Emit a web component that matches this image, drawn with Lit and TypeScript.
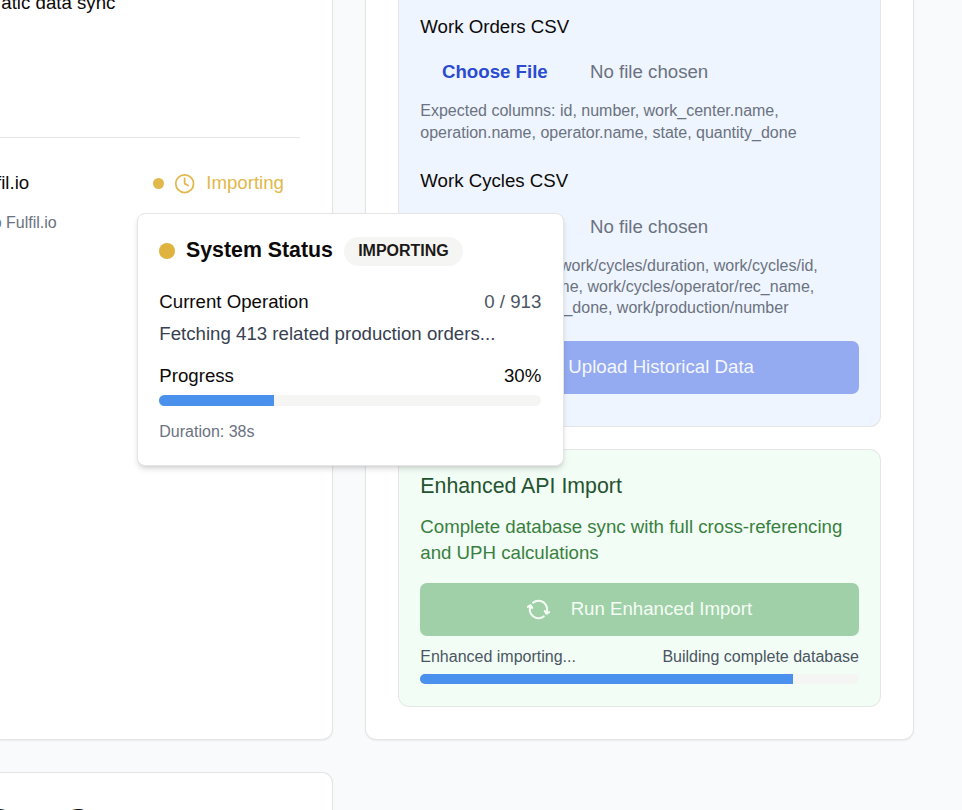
import { LitElement, html, css, svg } from "lit";
import { customElement, property } from "lit/decorators.js";
import { styleMap } from "lit/directives/style-map.js";

@customElement("progress-bar")
class ProgressBar extends LitElement {
  static styles = css`
    :host { display: block; }
    .track { height: 100%; border-radius: 999px; background: #f5f5f4; overflow: hidden; }
    .fill { height: 100%; background: #4991ec; }
  `;
  @property({ type: Number }) value = 0;
  render() {
    return html`<div class="track"><div class="fill" style=${styleMap({ width: `${this.value}%` })}></div></div>`;
  }
}

@customElement("status-popover")
class StatusPopover extends LitElement {
  static styles = css`
    :host {
      display: block; box-sizing: border-box; width: 427px; height: 253px;
      padding: 21.3px 21.7px 21.3px 21.3px; background: #fff; border: 1px solid #e5e5e5; border-radius: 8px;
      box-shadow: 0 4px 6px -1px rgba(0, 0, 0, 0.13), 0 2px 4px -2px rgba(0, 0, 0, 0.12);
      font-size: 18.67px; line-height: 26.67px; color: #0c0a09;
    }
    .head { display: flex; align-items: center; height: 32px; }
    .dot { width: 16px; height: 16px; border-radius: 50%; background: #e0b33f; margin-right: 10.7px; }
    .title { font-size: 21.33px; font-weight: 700; margin-right: 11px; padding-bottom: 2px; white-space: nowrap; }
    .badge {
      box-sizing: border-box; width: 119px; height: 29px; line-height: 28px; border-radius: 15px;
      background: #f5f5f4; color: #1c1917; font-size: 16px; font-weight: 700; text-align: center;
    }
    .row { display: flex; justify-content: space-between; }
    .op { margin-top: 21.3px; }
    .count { color: #4b5563; }
    .message { margin-top: 5.3px; color: #374151; }
    .progress { margin-top: 16px; }
    progress-bar { height: 10.67px; margin-top: 5px; }
    .duration { margin-top: 15px; font-size: 16px; line-height: 21.33px; color: #6b7280; }
  `;
  render() {
    return html`
      <div class="head"><span class="dot"></span><span class="title">System Status</span><span class="badge">IMPORTING</span></div>
      <div class="row op"><span>Current Operation</span><span class="count">0 / 913</span></div>
      <div class="message">Fetching 413 related production orders...</div>
      <div class="row progress"><span>Progress</span><span>30%</span></div>
      <progress-bar .value=${30}></progress-bar>
      <div class="duration">Duration: 38s</div>
    `;
  }
}

const clockIcon = svg`<svg class="clock" viewBox="0 0 24 24" fill="none" stroke="currentColor" stroke-width="2" stroke-linecap="round" stroke-linejoin="round"><circle cx="12" cy="12" r="10"/><path d="M12 6v6l4 2"/></svg>`;

const syncIcon = svg`<svg class="sync" viewBox="0 0 512 512" fill="none" stroke="currentColor" stroke-width="44" stroke-linecap="round" stroke-linejoin="round"><path d="M434.67 285.59v-29.8c0-98.73-80.24-178.79-179.2-178.79a179 179 0 00-140.14 67.36m-38.53 82v29.8C76.8 355 157 435 256 435a180.45 180.45 0 00140-66.92"/><path d="M32 256l44-44 46 44M480 256l-44 44-46-44"/></svg>`;

@customElement("app-root")
class AppRoot extends LitElement {
  static styles = css`
    :host {
      display: block; position: relative; width: 962px; height: 810px; overflow: hidden;
      background: #f9fafc; color: #0c0a09;
      font-family: "Liberation Sans", Arial, sans-serif; font-size: 18.67px; line-height: 26.67px;
    }
    .page { display: grid; grid-template-columns: 333px 549px; column-gap: 32px; row-gap: 32px; grid-template-rows: 740px 200px; }
    .card { box-sizing: border-box; background: #fff; border: 1px solid #e5e5e5; box-shadow: 0 1px 2px rgba(0, 0, 0, 0.06); white-space: nowrap; }
    .left { border-left: 0; padding-right: 32px; }
    .connection { border-top: 0; border-radius: 0 0 11px 0; }
    .sources { border-radius: 0 11px 0 0; padding-top: 25.5px; }
    .feature { height: 137px; border-bottom: 1px solid #e5e5e5; box-sizing: content-box; }
    .feature span { display: block; margin-left: 1.3px; position: relative; top: -10px; }
    .status { display: flex; justify-content: space-between; align-items: center; padding: 32px 16px 0 0; height: 26.67px; }
    .name { margin-left: -4px; }
    .state { display: flex; align-items: center; color: #e0b84c; }
    .dot { width: 11px; height: 11px; border-radius: 50%; background: #e0b84c; margin-right: 10px; }
    .clock { width: 21.33px; height: 21.33px; margin-right: 11px; }
    .caption { font-size: 16px; line-height: 21.33px; color: #6b7280; margin: 15px 0 0 -7.3px; }
    h2 { margin: 0 0 0 -11px; font-size: 32px; line-height: 43px; font-weight: 700; }
    .imports { border-top: 0; border-radius: 0 0 11px 11px; padding: 0 32px; }
    .panel { box-sizing: border-box; border: 1px solid #e5e5e5; border-radius: 11px; padding: 0 21px 0 21.3px; }
    .upload { height: 427px; border-top: 0; border-radius: 0 0 11px 11px; padding-top: 13.5px; background: #eef5fe; }
    .api { height: 258px; margin-top: 22px; background: #f2fdf5; padding-top: 20px; }
    .file { display: flex; align-items: center; height: 53.33px; margin-top: 5.3px; padding-left: 21.7px; color: #6b7280; }
    .choose { width: 148px; color: #2b4bd1; font-weight: 700; }
    .hint { font-size: 16px; line-height: 21px; color: #6b7280; margin-top: 1.3px; }
    .first { line-height: 21.8px; }
    .cycles { margin-top: 24.6px; }
    .cycles + .file { margin-top: 6px; }
    .cycles + .file + .hint { margin-top: 0.8px; }
    .button { display: flex; align-items: center; justify-content: center; height: 53px; border-radius: 7px; color: #f4f7fe; }
    .blue { background: #94aaf1; margin-top: 23.2px; padding-left: 43px; }
    .green { background: #9fd0a7; color: #f5fcf6; margin-top: 17px; }
    .sync { width: 25px; height: 25px; margin: 0 19.5px 0 -1px; transform: rotate(14deg); }
    .heading { font-size: 21.33px; line-height: 32px; color: #24532f; }
    .text { color: #39803f; margin-top: 12px; line-height: 26px; }
    .labels { display: flex; justify-content: space-between; font-size: 16px; line-height: 21.33px; color: #4b5563; margin-top: 9.7px; }
    .api progress-bar { height: 10px; margin-top: 7px; }
    status-popover { position: absolute; left: 137px; top: 213px; }
  `;
  render() {
    return html`
      <div class="page">
        <section class="card left connection">
          <div class="feature"><span>atic data sync</span></div>
          <div class="status"><span class="name">fil.io</span><span class="state"><span class="dot"></span>${clockIcon}<span>Importing</span></span></div>
          <div class="caption">o Fulfil.io</div>
        </section>
        <section class="card imports">
          <div class="panel upload">
            <div>Work Orders CSV</div>
            <div class="file"><span class="choose">Choose File</span><span>No file chosen</span></div>
            <div class="hint first">Expected columns: id, number, work_center.name,<br />operation.name, operator.name, state, quantity_done</div>
            <div class="cycles">Work Cycles CSV</div>
            <div class="file"><span class="choose">Choose File</span><span>No file chosen</span></div>
            <div class="hint">Expected columns: work/cycles/duration, work/cycles/id,<br />work/cycles/rec_name, work/cycles/operator/rec_name,<br />work/cycles/quantity_done, work/production/number</div>
            <div class="button blue">Upload Historical Data</div>
          </div>
          <div class="panel api">
            <div class="heading">Enhanced API Import</div>
            <div class="text">Complete database sync with full cross-referencing<br />and UPH calculations</div>
            <div class="button green">${syncIcon}<span>Run Enhanced Import</span></div>
            <div class="labels"><span>Enhanced importing...</span><span>Building complete database</span></div>
            <progress-bar .value=${85}></progress-bar>
          </div>
        </section>
        <section class="card left sources"><h2>Data Sources</h2></section>
      </div>
      <status-popover></status-popover>
    `;
  }
}
